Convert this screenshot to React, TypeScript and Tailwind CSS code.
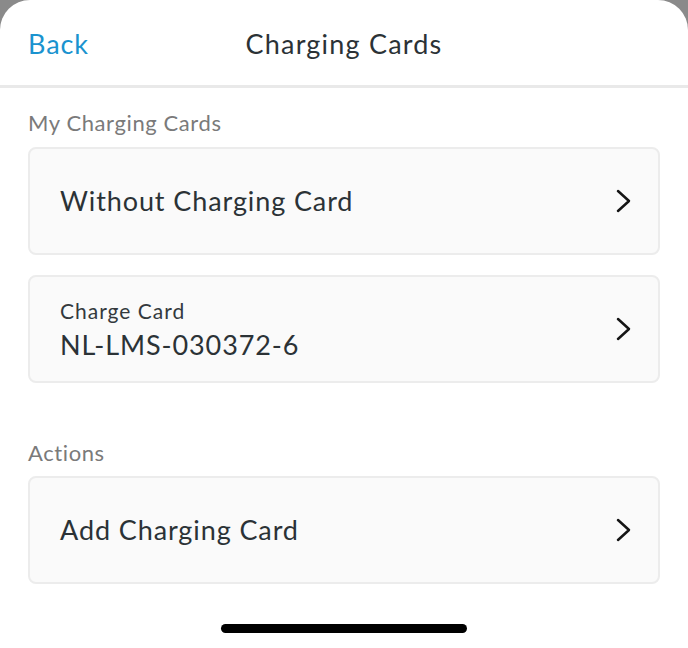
interface CardRowProps {
    label?: string;
    title: string;
}

function Chevron() {
    return (
        <svg width="18" height="24" viewBox="0 0 18 24" fill="none" className="shrink-0">
            <path d="M3 2l11 10L3 22" stroke="#151515" strokeWidth="2.5" strokeLinecap="round" strokeLinejoin="round" />
        </svg>
    );
}

function CardRow({ label, title }: CardRowProps) {
    return (
        <button
            type="button"
            className="flex h-[108px] w-full items-center justify-between rounded-[8px] border-2 border-[#ececec] bg-[#fafafa] pl-[30px] pr-[25px] text-left"
        >
            <div className="flex flex-col">
                {label && <span className="text-[21px] leading-[26px] tracking-[1px] text-[#33393d]">{label}</span>}
                <span className={`text-[27px] leading-[32px] tracking-[0.9px] text-[#2b3236] ${label ? 'mt-[5px]' : ''}`}>
                    {title}
                </span>
            </div>
            <Chevron />
        </button>
    );
}

function SectionLabel({ children }: { children: string }) {
    return <div className="px-[28px] text-[22px] leading-[26px] tracking-[0.6px] text-[#7a7a7a]">{children}</div>;
}

export default function App() {
    return (
        <div className="h-[648px] w-[688px] bg-[#8a8a8a] font-['Lato','Open_Sans',sans-serif]">
            <div className="flex h-full flex-col overflow-hidden rounded-t-[30px] bg-white">
                <header className="relative flex h-[88px] shrink-0 items-center border-b-[3px] border-[#e9e9e9] px-[28px]">
                    <button type="button" className="mt-[3px] text-[27px] tracking-[0.9px] text-[#1a93cf]">
                        Back
                    </button>
                    <h1 className="absolute left-1/2 mt-[3px] -translate-x-1/2 text-[27px] tracking-[1.2px] text-[#2b3236]">
                        Charging Cards
                    </h1>
                </header>

                <div className="pt-[22px]">
                    <SectionLabel>My Charging Cards</SectionLabel>
                    <div className="mt-[11px] flex flex-col gap-[20px] px-[28px]">
                        <CardRow title="Without Charging Card" />
                        <CardRow label="Charge Card" title="NL-LMS-030372-6" />
                    </div>

                    <div className="mt-[57px]">
                        <SectionLabel>Actions</SectionLabel>
                    </div>
                    <div className="mt-[10px] px-[28px]">
                        <CardRow title="Add Charging Card" />
                    </div>
                </div>

                <div className="mt-auto flex justify-center pb-[15px]">
                    <div className="h-[9px] w-[246px] rounded-full bg-black" />
                </div>
            </div>
        </div>
    );
}
